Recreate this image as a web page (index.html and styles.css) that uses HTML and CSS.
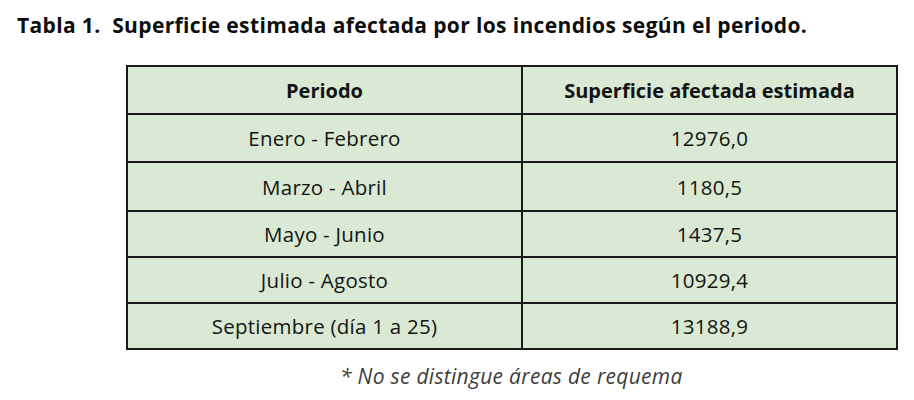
FILE: index.html
```html
<!DOCTYPE html>
<html lang="es">
<head>
<meta charset="utf-8">
<link rel="stylesheet" href="styles.css">
</head>
<body>
<h1 class="title">Tabla 1.&nbsp; Superficie estimada afectada por los incendios según el periodo.</h1>
<table class="data">
  <thead>
    <tr><th>Periodo</th><th>Superficie afectada estimada</th></tr>
  </thead>
  <tbody>
    <tr><td>Enero - Febrero</td><td>12976,0</td></tr>
    <tr><td>Marzo - Abril</td><td>1180,5</td></tr>
    <tr><td>Mayo - Junio</td><td>1437,5</td></tr>
    <tr><td>Julio - Agosto</td><td>10929,4</td></tr>
    <tr><td>Septiembre (día 1 a 25)</td><td>13188,9</td></tr>
  </tbody>
</table>
<p class="note">* No se distingue áreas de requema</p>
</body>
</html>
```
FILE: styles.css
```css
html, body {
  margin: 0;
  padding: 0;
  background: #ffffff;
}
body {
  font-family: "Open Sans", Lato, sans-serif;
  color: #111;
  width: 914px;
  height: 400px;
  overflow: hidden;
}
.title {
  margin: 0;
  padding: 11px 0 0 17px;
  font-size: 21px;
  font-weight: 700;
  line-height: 28px;
  letter-spacing: 0.36px;
  color: #0d0d0d;
}
.data {
  margin: 26px 0 0 126px;
  border-collapse: collapse;
  background: #d9e9d3;
  width: 772px;
}
.data th, .data td {
  border: 2px solid #1a1a1a;
  text-align: center;
  font-size: 20.5px;
  letter-spacing: 0.25px;
  height: 44px;
  padding: 0;
  color: #141414;
}
.data th {
  font-weight: 700;
  font-size: 20px;
  letter-spacing: 0;
  height: 46px;
}
.data tbody tr:first-child td {
  height: 46px;
}
.data tbody tr:nth-child(2) td {
  height: 47px;
}
.data th:first-child, .data td:first-child {
  width: 393px;
}
.note {
  margin: 12px 0 0 0;
  padding-left: 340px;
  font-style: italic;
  font-size: 21px;
  letter-spacing: 0.3px;
  color: #3d3d3d;
}
```
